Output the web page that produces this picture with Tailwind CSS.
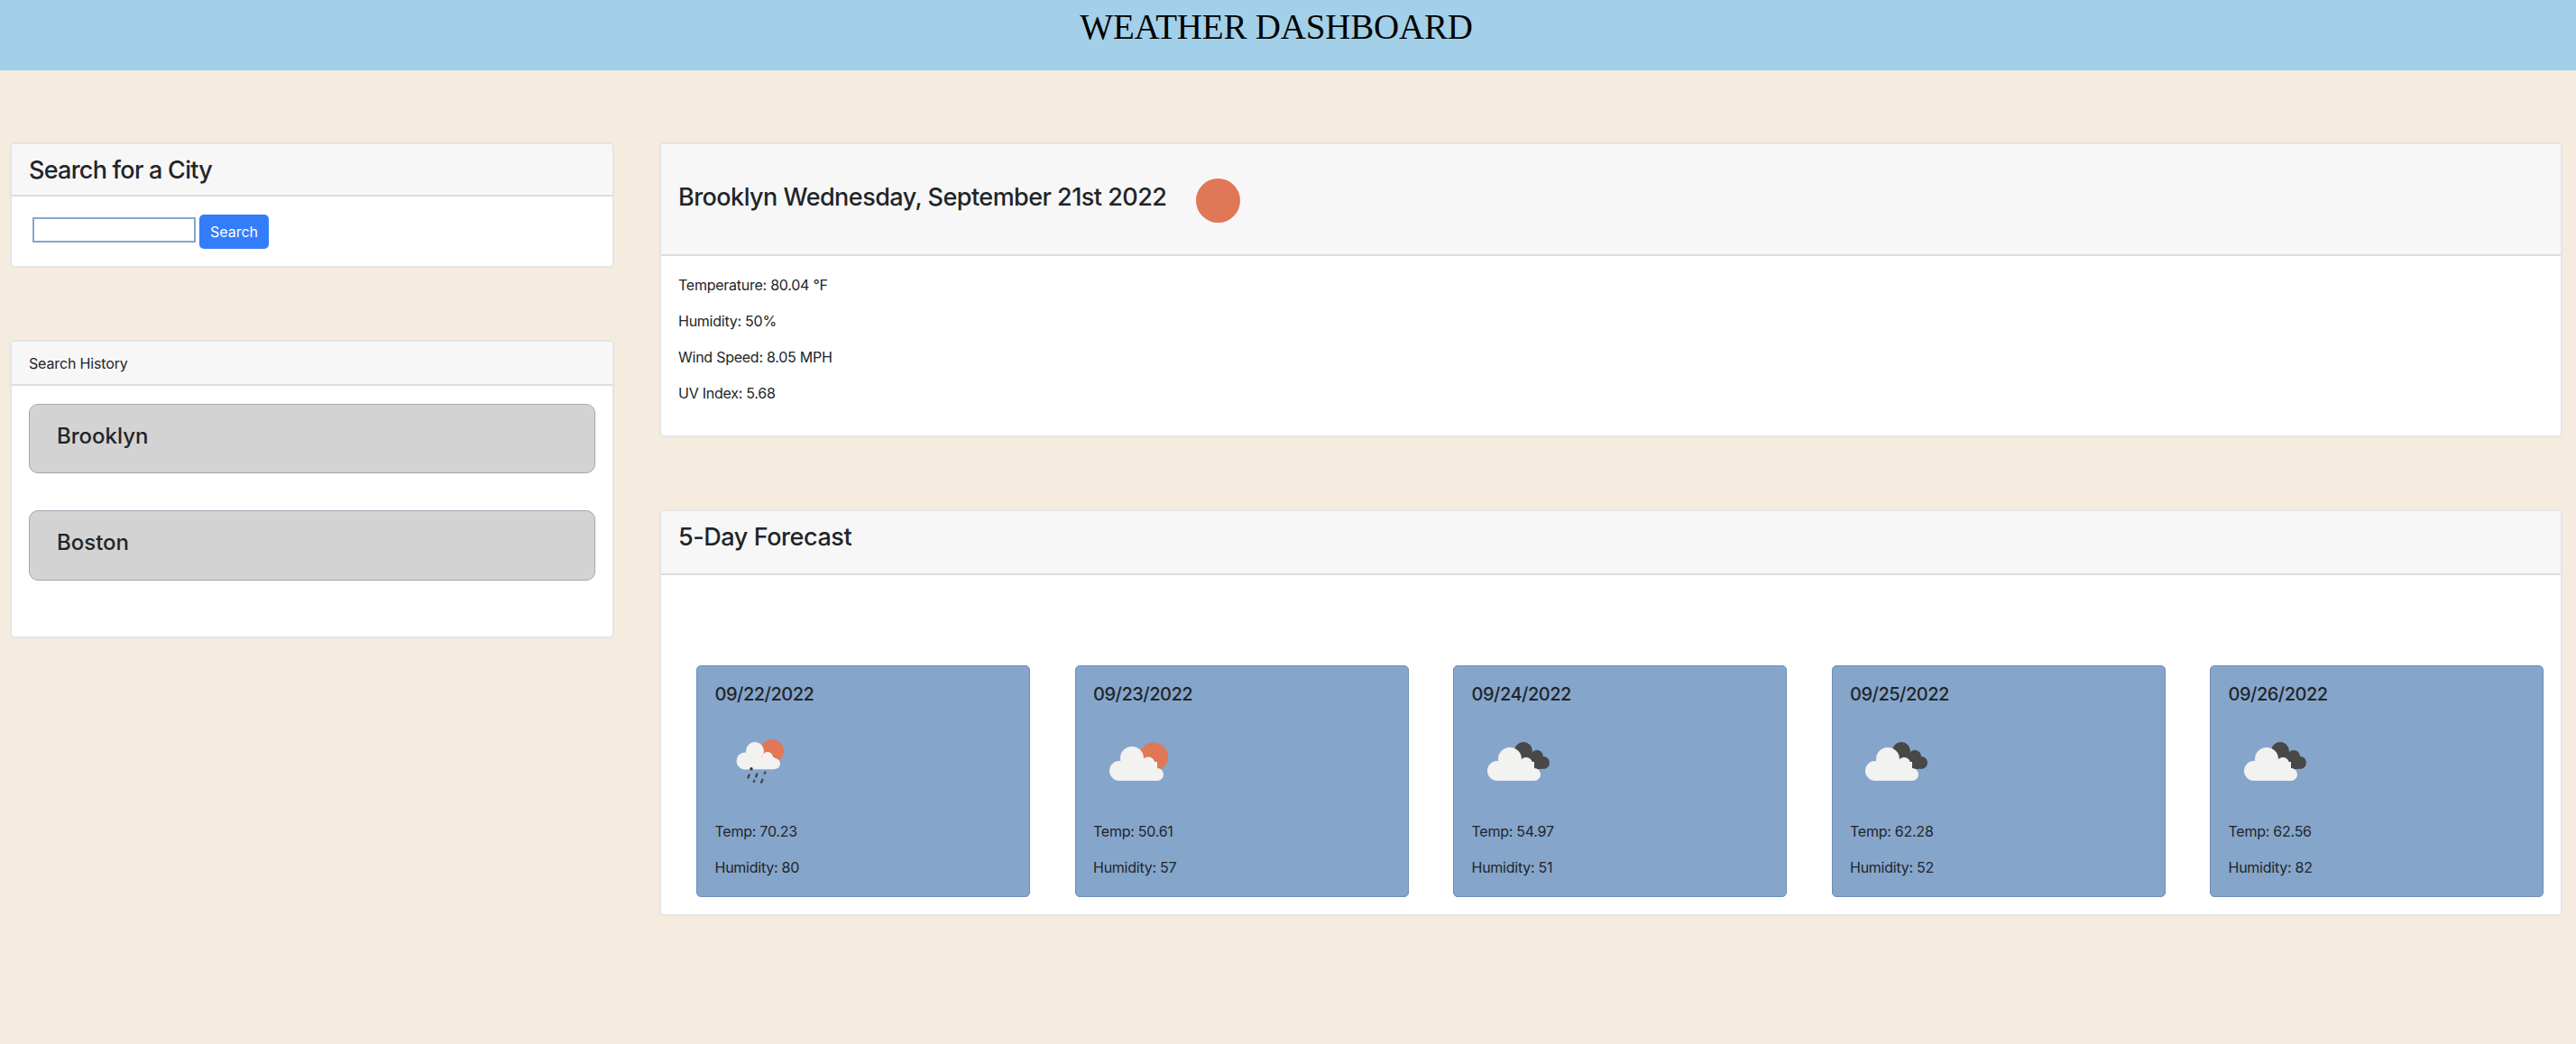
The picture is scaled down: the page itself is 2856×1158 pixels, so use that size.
<!DOCTYPE html>
<html lang="en">
<head>
    <meta charset="UTF-8">
    <meta name="viewport" content="width=device-width, initial-scale=1.0">
    <title>Weather Dashboard</title>
    <script src="https://cdn.jsdelivr.net/npm/@tailwindcss/browser@4"></script>
</head>
<body class="bg-[#f5ebdf] font-['Inter','Liberation_Sans',sans-serif] text-[#212529] min-h-[1158px]">
    <header class="bg-[#a2d0e9] h-[78px] text-center text-black pr-[26px]">
        <h1 class="font-['Liberation_Serif',serif] text-[39px] tracking-[-0.2px] leading-[60px]">WEATHER DASHBOARD</h1>
    </header>

    <main class="flex gap-[50px] pl-[11px] pt-[80px]">
        <!-- left column -->
        <section class="w-[670px] flex flex-col gap-[80px]">
            <div class="h-[139px] bg-white border-2 border-black/10 rounded-[5px] overflow-hidden">
                <div class="h-[58px] bg-[#f7f7f7] border-b-2 border-black/10 pl-[19px] flex items-center">
                    <h2 class="text-[27px] tracking-[-0.75px] font-medium leading-none">Search for a City</h2>
                </div>
                <form class="flex items-center pl-[23px] pt-[20px] gap-[4px]">
                    <input type="text" class="w-[181px] h-[28px] mb-[4px] border-2 border-[#86a5cb] bg-white">
                    <button type="button" class="w-[77px] h-[38px] bg-[#337dfa] text-white rounded-[5px] text-[16px]">Search</button>
                </form>
            </div>

            <div class="h-[331px] bg-white border-2 border-black/10 rounded-[5px] overflow-hidden">
                <div class="h-[49px] bg-[#f7f7f7] border-b-2 border-black/10 pl-[19px] flex items-center">
                    <h3 class="text-[16px] tracking-[-0.15px] leading-none">Search History</h3>
                </div>
                <div class="px-[19px] pt-[20px] flex flex-col gap-[41px]">
                    <button type="button" class="h-[77px] bg-[#d3d3d3] border-[1.5px] border-[#a0a6b2] rounded-[10px] text-left pl-[30px] pb-[6px] text-[24px] font-medium">Brooklyn</button>
                    <button type="button" class="h-[78px] bg-[#d3d3d3] border-[1.5px] border-[#a0a6b2] rounded-[10px] text-left pl-[30px] pb-[6px] text-[24px] font-medium">Boston</button>
                </div>
            </div>
        </section>

        <!-- right column -->
        <section class="w-[2110px] flex flex-col gap-[80px]">
            <div class="h-[327px] bg-white border-2 border-black/10 rounded-[5px] overflow-hidden">
                <div class="h-[124px] bg-[#f7f7f7] border-b-2 border-black/10 pl-[19px] flex items-center">
                    <h2 class="text-[27px] tracking-[-0.54px] font-medium leading-none pb-[6px]">Brooklyn Wednesday, September 21st 2022</h2>
                    <span class="ml-[33px] w-[49px] h-[49px] rounded-full bg-[#e07757] mt-[2px]"></span>
                </div>
                <div class="pl-[19px] pt-[20px] flex flex-col gap-[16px] text-[16px] tracking-[-0.25px] leading-[24px]">
                    <p>Temperature: 80.04 °F</p>
                    <p>Humidity: 50%</p>
                    <p>Wind Speed: 8.05 MPH</p>
                    <p>UV Index: 5.68</p>
                </div>
            </div>

            <div class="h-[451px] bg-white border-2 border-black/10 rounded-[5px] overflow-hidden">
                <div class="h-[71px] bg-[#f7f7f7] border-b-2 border-black/10 pl-[19px] pb-[13px] flex items-center">
                    <h2 class="text-[27px] tracking-[-0.43px] font-medium leading-none">5-Day Forecast</h2>
                </div>
                <div class="flex gap-[49.5px] pl-[39px] pt-[100px]">
                    <article class="w-[370px] h-[257px] shrink-0 bg-[#86a5cb] border-[1.5px] border-[#6c8db4] rounded-[5px] pl-[19.5px] pt-[17.5px]">
                        <h5 class="text-[20px] tracking-[-0.5px] font-medium leading-[26px]">09/22/2022</h5>
                        <svg class="w-[100px] h-[100px] mt-[12px]" viewBox="0 0 100 100">
                            <circle cx="63" cy="38" r="13" fill="#e07757"/>
                            <g fill="#f2f2f1">
                                <circle cx="33" cy="49" r="9.5"/><circle cx="44" cy="38" r="10"/><circle cx="58" cy="45" r="6"/><circle cx="66" cy="52" r="6"/>
                                <rect x="33" y="45" width="33" height="13.3"/>
                            </g>
                            <circle cx="40" cy="57.7" r="1.7" fill="#333"/>
                            <g stroke="#484848" stroke-width="2.4" stroke-linecap="round">
                                <path d="M37.7 64.5l-1.3 3"/><path d="M46.4 63.5l-1.3 3"/><path d="M55.3 61.7l-.5 1.2"/><path d="M43.3 70.8l-.5 1.1"/><path d="M52.4 69.8l-1.3 3"/>
                            </g>
                        </svg>
                        <div class="mt-[15px] flex flex-col gap-[16px] text-[16px] tracking-[-0.25px] leading-[24px]">
                            <p>Temp: 70.23</p>
                            <p>Humidity: 80</p>
                        </div>
                    </article>

                    <article class="w-[370px] h-[257px] shrink-0 bg-[#86a5cb] border-[1.5px] border-[#6c8db4] rounded-[5px] pl-[19.5px] pt-[17.5px]">
                        <h5 class="text-[20px] tracking-[-0.5px] font-medium leading-[26px]">09/23/2022</h5>
                        <svg class="w-[100px] h-[100px] mt-[12px]" viewBox="0 0 100 100">
                            <circle cx="67" cy="44.5" r="16" fill="#e07757"/>
                            <g fill="#f2f2f1">
                                <circle cx="29" cy="60" r="11"/><circle cx="43" cy="46" r="13"/><circle cx="61" cy="52" r="7.5"/><circle cx="71" cy="64" r="7"/>
                                <rect x="29" y="50" width="42" height="21"/>
                            </g>
                        </svg>
                        <div class="mt-[15px] flex flex-col gap-[16px] text-[16px] tracking-[-0.25px] leading-[24px]">
                            <p>Temp: 50.61</p>
                            <p>Humidity: 57</p>
                        </div>
                    </article>

                    <article class="w-[370px] h-[257px] shrink-0 bg-[#86a5cb] border-[1.5px] border-[#6c8db4] rounded-[5px] pl-[19.5px] pt-[17.5px]">
                        <h5 class="text-[20px] tracking-[-0.5px] font-medium leading-[26px]">09/24/2022</h5>
                        <svg class="w-[100px] h-[100px] mt-[12px] ml-[2px]" viewBox="0 0 100 100">
                            <g fill="#484848">
                                <circle cx="55" cy="38" r="10"/><circle cx="70" cy="44" r="7"/><circle cx="77" cy="51" r="7"/>
                                <rect x="50" y="42" width="25" height="16"/>
                            </g>
                            <g fill="#f2f2f1">
                                <circle cx="26" cy="60" r="11"/><circle cx="40" cy="47" r="13"/><circle cx="58" cy="52" r="7"/><circle cx="67" cy="64" r="7"/>
                                <rect x="26" y="50" width="41" height="21"/>
                            </g>
                        </svg>
                        <div class="mt-[15px] flex flex-col gap-[16px] text-[16px] tracking-[-0.25px] leading-[24px]">
                            <p>Temp: 54.97</p>
                            <p>Humidity: 51</p>
                        </div>
                    </article>

                    <article class="w-[370px] h-[257px] shrink-0 bg-[#86a5cb] border-[1.5px] border-[#6c8db4] rounded-[5px] pl-[19.5px] pt-[17.5px]">
                        <h5 class="text-[20px] tracking-[-0.5px] font-medium leading-[26px]">09/25/2022</h5>
                        <svg class="w-[100px] h-[100px] mt-[12px] ml-[2px]" viewBox="0 0 100 100">
                            <g fill="#484848">
                                <circle cx="55" cy="38" r="10"/><circle cx="70" cy="44" r="7"/><circle cx="77" cy="51" r="7"/>
                                <rect x="50" y="42" width="25" height="16"/>
                            </g>
                            <g fill="#f2f2f1">
                                <circle cx="26" cy="60" r="11"/><circle cx="40" cy="47" r="13"/><circle cx="58" cy="52" r="7"/><circle cx="67" cy="64" r="7"/>
                                <rect x="26" y="50" width="41" height="21"/>
                            </g>
                        </svg>
                        <div class="mt-[15px] flex flex-col gap-[16px] text-[16px] tracking-[-0.25px] leading-[24px]">
                            <p>Temp: 62.28</p>
                            <p>Humidity: 52</p>
                        </div>
                    </article>

                    <article class="w-[370px] h-[257px] shrink-0 bg-[#86a5cb] border-[1.5px] border-[#6c8db4] rounded-[5px] pl-[19.5px] pt-[17.5px]">
                        <h5 class="text-[20px] tracking-[-0.5px] font-medium leading-[26px]">09/26/2022</h5>
                        <svg class="w-[100px] h-[100px] mt-[12px] ml-[2px]" viewBox="0 0 100 100">
                            <g fill="#484848">
                                <circle cx="55" cy="38" r="10"/><circle cx="70" cy="44" r="7"/><circle cx="77" cy="51" r="7"/>
                                <rect x="50" y="42" width="25" height="16"/>
                            </g>
                            <g fill="#f2f2f1">
                                <circle cx="26" cy="60" r="11"/><circle cx="40" cy="47" r="13"/><circle cx="58" cy="52" r="7"/><circle cx="67" cy="64" r="7"/>
                                <rect x="26" y="50" width="41" height="21"/>
                            </g>
                        </svg>
                        <div class="mt-[15px] flex flex-col gap-[16px] text-[16px] tracking-[-0.25px] leading-[24px]">
                            <p>Temp: 62.56</p>
                            <p>Humidity: 82</p>
                        </div>
                    </article>
                </div>
            </div>
        </section>
    </main>
</body>
</html>
